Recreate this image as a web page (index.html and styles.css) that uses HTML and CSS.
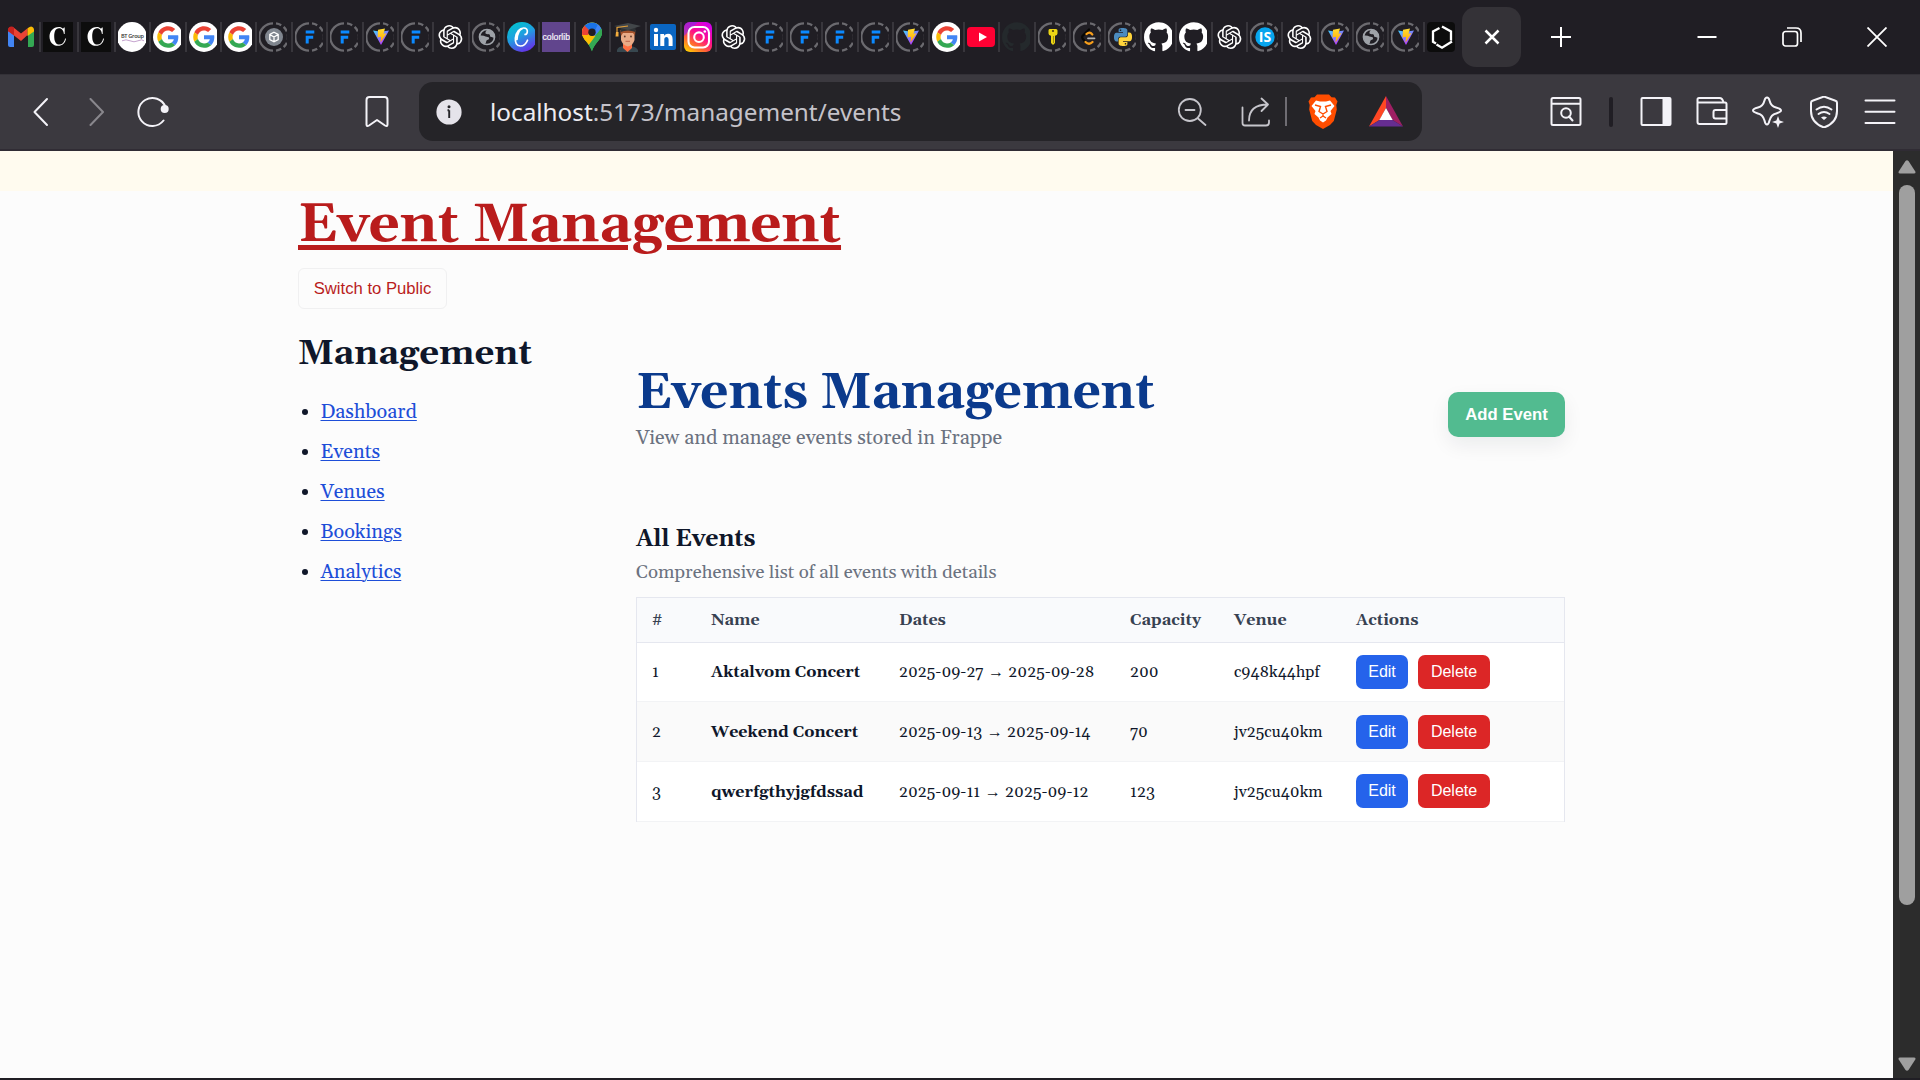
FILE: index.html
```
<!DOCTYPE html>
<html lang="en">
<head>
<meta charset="utf-8">
<title>Events Management</title>
<link rel="stylesheet" href="styles.css">
</head>
<body>
<svg class="sprite" width="0" height="0" aria-hidden="true">
  <defs>
    <linearGradient id="gVite" x1="0" y1="0" x2=".6" y2="1"><stop offset="0" stop-color="#41d1ff"/><stop offset="1" stop-color="#bd34fe"/></linearGradient>
    <linearGradient id="gBolt" x1="0" y1="0" x2="0" y2="1"><stop offset="0" stop-color="#ffdd35"/><stop offset="1" stop-color="#ffa800"/></linearGradient>
    <linearGradient id="gCanva" x1=".2" y1="0" x2=".7" y2="1"><stop offset="0" stop-color="#00c4cc"/><stop offset=".45" stop-color="#1f9fe0"/><stop offset="1" stop-color="#6a2be8"/></linearGradient>
    <linearGradient id="gInsta" x1=".1" y1="1" x2=".75" y2="0"><stop offset="0" stop-color="#ffd600"/><stop offset=".3" stop-color="#ff6930"/><stop offset=".6" stop-color="#fe0d8b"/><stop offset="1" stop-color="#d300e8"/></linearGradient>
    <symbol id="dash" viewBox="0 0 28 30"><path d="M14 1.300A13.700 13.700 0 0 0 14 28.700" fill="none" stroke="#6b6a6f" stroke-width="2.300"/><path d="M17 28.600A13.700 13.700 0 0 0 17 1.400" fill="none" stroke="#6b6a6f" stroke-width="2.300" stroke-dasharray="5.500 3"/></symbol>
    <symbol id="gmail" viewBox="0 0 28 30"><path d="M1 9v14q0 2 2 2h4V12z" fill="#4285f4"/><path d="M27 9v14q0 2-2 2h-4V12z" fill="#34a853"/><path d="M1 9q0-4 3.500-4 1.500 0 3 1.300L14 11.500 20.500 6.300V13L14 19 7 13.500 1 9z" fill="#ea4335"/><path d="M1 8q0-3.500 3.500-3.500Q6 4.500 7 5.700v7.800L1 9z" fill="#c5221f"/><path d="M21 6q1.500-1.500 3.200-1.500Q27 5 27 8v1.500l-6.500 4.500V6.500z" fill="#fbbc04"/></symbol>
    <symbol id="cmark" viewBox="0 0 30 30"><path d="M0 0h30v30H0z" fill="#0d0d0d"/><path d="M16 5C10 5 6.500 9.500 6.500 14.500c0 5.700 3.500 9.300 8.500 9.300 4.500 0 7.500-2.800 8-7.300h-.8c-.9 3.800-2.900 6.100-5.800 6.100-3.900 0-5.200-4-5.200-8.400 0-4.400 1.300-8 4.800-8 3 0 4.600 2.500 4.900 5.800h.8V5.500h-.7l-1 1.300C18.800 5.500 17.500 5 16 5z" fill="#fff"/></symbol>
    <symbol id="bt" viewBox="0 0 28 30"><circle cx="14" cy="15" r="14.900" fill="#fff"/><text x="3" y="16" font-family="Open Sans, sans-serif" font-size="5.600" font-weight="600" fill="#333" textLength="23">BT Group</text><path d="M4 18.800q4-2 8 0t8 0 6 0" stroke="#b58ac0" stroke-width=".8" fill="none"/></symbol>
    <symbol id="google" viewBox="0 0 28 30"><circle cx="15" cy="15" r="15" fill="#fff"/><g transform="translate(4.200 4.200) scale(.45)"><path fill="#ea4335" d="M24 9.500c3.540 0 6.710 1.220 9.210 3.600l6.850-6.850C35.900 2.380 30.470 0 24 0 14.620 0 6.510 5.380 2.560 13.220l7.980 6.190C12.430 13.720 17.740 9.500 24 9.500z"/><path fill="#4285f4" d="M46.980 24.550c0-1.570-.15-3.090-.38-4.550H24v9.020h12.940c-.58 2.960-2.260 5.480-4.780 7.180l7.730 6c4.510-4.180 7.090-10.360 7.090-17.650z"/><path fill="#fbbc05" d="M10.530 28.590c-.48-1.450-.76-2.990-.76-4.590s.27-3.140.76-4.590l-7.980-6.190C.92 16.460 0 20.120 0 24c0 3.880.92 7.540 2.560 10.780l7.970-6.190z"/><path fill="#34a853" d="M24 48c6.480 0 11.930-2.130 15.890-5.810l-7.730-6c-2.150 1.450-4.920 2.300-8.160 2.300-6.260 0-11.570-4.220-13.470-9.910l-7.980 6.190C6.510 42.620 14.620 48 24 48z"/></g></symbol>
    <symbol id="cube" viewBox="0 0 28 30"><use href="#dash"/><circle cx="15" cy="15" r="9" fill="#80868f"/><path d="M15 10.200l4.200 2.300v5L15 19.800l-4.200-2.300v-5zM10.800 12.500L15 15l4.200-2.500M15 15v4.800" fill="none" stroke="#fff" stroke-width="1.300"/></symbol>
    <symbol id="frappe" viewBox="0 0 28 30"><use href="#dash"/><path d="M10.700 8.500h8.600v3h-8.600zM10.700 13.700h7.500v3h-4.500V21.500h-3z" fill="#0b89ff"/></symbol>
    <symbol id="vite" viewBox="0 0 28 30"><use href="#dash"/><path d="M7 8.500l8 1.200 8-1.200-8 14.500z" fill="url(#gVite)"/><path d="M12 7.800l7-1.300-1.500 5.300 3-.5-6 9.200.6-5.700-3.500.6z" fill="url(#gBolt)"/></symbol>
    <symbol id="gpt" viewBox="-2.400 -3 28 30"><path fill="#fff" d="M22.282 9.821a5.985 5.985 0 0 0-.516-4.911 6.046 6.046 0 0 0-6.510-2.900A6.065 6.065 0 0 0 4.981 4.182a5.985 5.985 0 0 0-3.998 2.900 6.046 6.046 0 0 0 .743 7.097 5.980 5.980 0 0 0 .511 4.911 6.051 6.051 0 0 0 6.515 2.900A5.985 5.985 0 0 0 13.260 24a6.056 6.056 0 0 0 5.772-4.206 5.989 5.989 0 0 0 3.998-2.900 6.056 6.056 0 0 0-.748-7.073zm-9.022 12.608a4.476 4.476 0 0 1-2.876-1.041l.142-.08 4.778-2.758a.795.795 0 0 0 .393-.681v-6.737l2.020 1.169a.071.071 0 0 1 .038.052v5.583a4.504 4.504 0 0 1-4.495 4.494zm-9.661-4.125a4.471 4.471 0 0 1-.535-3.014l.142.085 4.783 2.758a.771.771 0 0 0 .781 0l5.843-3.369v2.332a.08.08 0 0 1-.033.062L9.740 19.950a4.499 4.499 0 0 1-6.141-1.646zM2.341 7.896a4.485 4.485 0 0 1 2.366-1.973V11.600a.766.766 0 0 0 .388.677l5.814 3.354-2.020 1.169a.076.076 0 0 1-.071 0l-4.830-2.787A4.504 4.504 0 0 1 2.341 7.872zm16.596 3.856L13.104 8.364 15.119 7.200a.076.076 0 0 1 .071 0l4.830 2.791a4.494 4.494 0 0 1-.677 8.104v-5.677a.79.79 0 0 0-.406-.666zm2.011-3.023l-.142-.085-4.774-2.782a.776.776 0 0 0-.785 0L9.409 9.230V6.897a.066.066 0 0 1 .028-.062l4.830-2.787a4.499 4.499 0 0 1 6.681 4.680zM8.307 12.863l-2.020-1.164a.08.08 0 0 1-.038-.057V6.074a4.499 4.499 0 0 1 7.376-3.454l-.142.081L8.704 5.459a.795.795 0 0 0-.393.681zm1.097-2.366l2.602-1.500 2.607 1.500v2.999l-2.597 1.500-2.607-1.500z"/></symbol>
    <symbol id="globe" viewBox="0 0 28 30"><use href="#dash"/><circle cx="15" cy="15" r="7.500" fill="none" stroke="#9ea2a8" stroke-width="1.700"/><path d="M15 7.500q-2 2.500-1.500 4 2 1.200 3.500.5 1.500 1 1 2.500l4.500 1.500q1-7-7.500-8.500zM7.500 13.500q4-.5 6 1 2.500.5 3.500 1 .5 2-2 2.500-1 .5-1 2.500l-1.500 2Q8 20 7.500 13.500z" fill="#9ea2a8"/></symbol>
    <symbol id="canva" viewBox="0 0 28 30"><circle cx="15" cy="15" r="15" fill="url(#gCanva)"/><path d="M20.500 18.200C19 22 16.500 24 13.400 24c-4 0-5.400-3.700-5-7.900C9 10 12.700 6 16.700 6c2.500 0 3.900 1.500 3.600 3.800-.2 1.600-1.200 2.600-2.200 2.600M10 17.500C10.500 11 13 7.300 15.500 6.500" fill="none" stroke="#fff" stroke-width="1.700" stroke-linecap="round"/></symbol>
    <symbol id="colorlib" viewBox="0 0 28 30"><path d="M0 0h28v30H0z" fill="#61458d"/><text x=".5" y="17.800" font-family="Liberation Sans, sans-serif" font-size="9" fill="#f6f3fa" stroke="#f6f3fa" stroke-width=".2" textLength="27.500" lengthAdjust="spacingAndGlyphs">colorlib</text></symbol>
    <symbol id="maps" viewBox="0 0 28 30"><clipPath id="pin"><path d="M14 .500C8.300.500 4 5 4 10.500c0 7 6.800 9 10 19 3.200-10 10-12 10-19C24 5 19.700.500 14 .500z"/></clipPath><g clip-path="url(#pin)"><path d="M0 0h28v30H0z" fill="#34a853"/><path d="M0 0h28L14 10 6 22 0 14z" fill="#fbbc04"/><path d="M0 4l14 6-9 10z" fill="#fbbc04"/><path d="M2 3l5-1 7 8-9 6-3-2z" fill="#ea4335"/><path d="M6 3l8-4 11 5-11 7z" fill="#1a73e8"/><path d="M20 2l5 6-14 14z" fill="#4285f4"/><path d="M24 7v6L12 30 8 22z" fill="#34a853"/><path d="M3 13l5 0L20 14 9 25z" fill="#fbbc04"/><path d="M24 5v10L12 31 10 24z" fill="#34a853"/></g><circle cx="14" cy="10.300" r="3.700" fill="#201e24"/></symbol>
    <symbol id="grad" viewBox="0 0 28 30"><path d="M4 30v-2q1-3.500 7-4h6q6 .5 8 4v2z" fill="#37474f"/><path d="M10 22h9v4l-4.500 4L10 26z" fill="#ff7043"/><path d="M8 9h13.500v9q-1.500 5.500-6.700 6.500Q9.500 23 8 18z" fill="#e9ab87"/><path d="M7 8h15.500l-.5 6-2-3H10l-2 3z" fill="#a5532c"/><path d="M7.500 4.500L15 7l7.500-2.500V10q-7.500-3-15 0z" fill="#2f3235"/><path d="M1 4l14-3 13 3-13 4z" fill="#424649"/><path d="M15 4L4 5.500V11" fill="none" stroke="#e5a13a" stroke-width="1.200"/><path d="M3 10h2.500v4.500H2.500z" fill="#f3ad3d"/><circle cx="11.800" cy="14.500" r=".9" fill="#5d3a2a"/><circle cx="18" cy="14.500" r=".9" fill="#5d3a2a"/><path d="M12.500 19.300h4.500" stroke="#c0654a"/></symbol>
    <symbol id="linkedin" viewBox="0 0 28 30"><rect x="1" y="2" width="26" height="26" rx="2" fill="#0a66c2"/><path d="M5 12h4v12H5zM11.300 12h3.800v1.700q1.300-2 3.900-2 4.600 0 4.600 5.500V24h-4v-6.300q0-2.700-2-2.700-2.300 0-2.300 2.800V24h-4z" fill="#fff"/><circle cx="7" cy="8" r="2.200" fill="#fff"/></symbol>
    <symbol id="insta" viewBox="0 0 28 30"><rect width="28" height="30" rx="6" fill="url(#gInsta)"/><path d="M6 0h8L0 14V6q0-6 6-6z" fill="#7a2bf0" opacity=".6"/><g fill="none" stroke="#fff" stroke-width="2.100"><rect x="4.500" y="5" width="20.500" height="20.500" rx="6"/><circle cx="15" cy="15.200" r="4.800"/></g><circle cx="20.800" cy="9.500" r="1.300" fill="#fff"/></symbol>
    <symbol id="youtube" viewBox="0 0 28 30"><rect y="5" width="28" height="20" rx="4" fill="#ff0033"/><path d="M12 10.500l8 4.500-8 4.500z" fill="#fff"/></symbol>
    <symbol id="github" viewBox="0 0 28 30"><path transform="scale(1.230)" fill="currentColor" d="M12 .297c-6.630 0-12 5.373-12 12 0 5.303 3.438 9.800 8.205 11.385.6.113.82-.258.82-.577 0-.285-.01-1.040-.015-2.040-3.338.724-4.042-1.610-4.042-1.610C4.422 18.070 3.633 17.700 3.633 17.700c-1.087-.744.084-.729.084-.729 1.205.084 1.838 1.236 1.838 1.236 1.070 1.835 2.809 1.305 3.495.998.108-.776.417-1.305.76-1.605-2.665-.3-5.466-1.332-5.466-5.930 0-1.310.465-2.380 1.235-3.220-.135-.303-.54-1.523.105-3.176 0 0 1.005-.322 3.300 1.230.96-.267 1.980-.399 3-.405 1.020.006 2.040.138 3 .405 2.280-1.552 3.285-1.230 3.285-1.230.645 1.653.24 2.873.12 3.176.765.84 1.230 1.910 1.230 3.220 0 4.610-2.805 5.625-5.475 5.920.42.36.81 1.096.81 2.220 0 1.606-.015 2.896-.015 3.286 0 .315.21.69.825.57C20.565 22.092 24 17.592 24 12.297c0-6.627-5.373-12-12-12"/></symbol>
    <symbol id="key" viewBox="0 0 28 30"><use href="#dash"/><path d="M11.500 7h6.500q1.500 0 1.500 1.500v3q0 2-2.500 2.200V21l-2 2-2-2v-7.300q-2.500-.2-2.500-2.200V8.500Q10.500 7 11.500 7z" fill="#ecd514"/><circle cx="15" cy="9" r="1.100" fill="#4b3d10"/><path d="M15.500 14v7" stroke="#a08c10"/></symbol>
    <symbol id="leet" viewBox="0 0 28 30"><use href="#dash"/><g fill="none" stroke-width="2.300" stroke-linecap="round"><path d="M16 7.500L9.500 14q-1 1.300 0 2.500l2.500 3" stroke="#070706"/><path d="M13.500 12q2.500-2.300 4.500-.8l1.300 1.300M12.500 20q3.500 3.500 7 0" stroke="#f89f1b"/><path d="M15 16.300h6.500" stroke="#b3b3b3" stroke-width="1.800"/></g></symbol>
    <symbol id="pyhalf" viewBox="0 0 24 24"><path d="M14.250.180l.9.200.73.260.59.300.45.320.34.340.25.340.16.330.1.300.04.260.02.200-.01.130V8.500l-.05.630-.13.550-.21.460-.26.380-.3.310-.33.250-.35.190-.35.140-.33.100-.3.070-.26.040-.21.020H8.770l-.69.050-.59.140-.5.220-.41.270-.33.320-.27.350-.2.360-.15.370-.1.350-.07.320-.04.270-.02.210v3.060H3.170l-.21-.03-.28-.07-.32-.12-.35-.18-.36-.26-.36-.36-.35-.46-.32-.59-.28-.73-.21-.88-.14-1.050-.05-1.230.06-1.220.16-1.040.24-.87.32-.71.36-.57.4-.44.42-.33.42-.24.4-.16.36-.1.32-.05.24-.01h.16l.06.010h8.160v-.83H6.180l-.01-2.750-.02-.37.05-.34.11-.31.17-.28.25-.26.31-.23.38-.2.44-.18.51-.15.58-.12.64-.1.71-.06.77-.04.84-.02 1.270.050zm-6.300 1.980l-.23.330-.08.410.08.410.23.340.33.220.41.090.41-.09.33-.22.23-.34.08-.41-.08-.41-.23-.33-.33-.22-.41-.09-.41.090z"/></symbol>
    <symbol id="python" viewBox="0 0 28 30"><use href="#dash"/><g transform="translate(6 6)"><use href="#pyhalf" width="18" height="18" fill="#4b8bbe"/><use href="#pyhalf" width="18" height="18" fill="#ffd43b" transform="rotate(180 9 9)"/></g></symbol>
    <symbol id="is" viewBox="0 0 28 30"><use href="#dash"/><circle cx="15" cy="15" r="9.700" fill="#08a5ee"/><text x="15" y="20" text-anchor="middle" font-family="Open Sans, sans-serif" font-weight="700" font-size="14" fill="#fff">IS</text></symbol>
    <symbol id="hexa" viewBox="0 0 28 30"><rect width="28" height="30" rx="4" fill="#0c0c0c"/><path d="M12.500 6L6 9.500v10.300l3 1.700M15 4.500l9 5v9M25 19.500l-10 6.200-5.500-3.200" fill="none" stroke="#fff" stroke-width="2.300"/></symbol>
  </defs>
</svg>

<div class="window">
  <header class="tabstrip">
    <div class="tabs">
      <span class="tab tab-wide tab-first"><svg><use href="#gmail"/></svg></span>
      <span class="tab tab-wide"><svg class="square"><use href="#cmark"/></svg></span>
      <span class="tab tab-wide"><svg class="square"><use href="#cmark"/></svg></span>
      <span class="tab"><svg><use href="#bt"/></svg></span>
      <span class="tab"><svg><use href="#google"/></svg></span>
      <span class="tab"><svg><use href="#google"/></svg></span>
      <span class="tab"><svg><use href="#google"/></svg></span>
      <span class="tab"><svg><use href="#cube"/></svg></span>
      <span class="tab"><svg><use href="#frappe"/></svg></span>
      <span class="tab"><svg><use href="#frappe"/></svg></span>
      <span class="tab"><svg><use href="#vite"/></svg></span>
      <span class="tab"><svg><use href="#frappe"/></svg></span>
      <span class="tab"><svg><use href="#gpt"/></svg></span>
      <span class="tab"><svg><use href="#globe"/></svg></span>
      <span class="tab"><svg><use href="#canva"/></svg></span>
      <span class="tab"><svg><use href="#colorlib"/></svg></span>
      <span class="tab"><svg><use href="#maps"/></svg></span>
      <span class="tab"><svg><use href="#grad"/></svg></span>
      <span class="tab"><svg><use href="#linkedin"/></svg></span>
      <span class="tab"><svg><use href="#insta"/></svg></span>
      <span class="tab"><svg><use href="#gpt"/></svg></span>
      <span class="tab"><svg><use href="#frappe"/></svg></span>
      <span class="tab"><svg><use href="#frappe"/></svg></span>
      <span class="tab"><svg><use href="#frappe"/></svg></span>
      <span class="tab"><svg><use href="#frappe"/></svg></span>
      <span class="tab"><svg><use href="#vite"/></svg></span>
      <span class="tab"><svg><use href="#google"/></svg></span>
      <span class="tab"><svg><use href="#youtube"/></svg></span>
      <span class="tab dim"><svg><use href="#github"/></svg></span>
      <span class="tab"><svg><use href="#key"/></svg></span>
      <span class="tab"><svg><use href="#leet"/></svg></span>
      <span class="tab"><svg><use href="#python"/></svg></span>
      <span class="tab"><svg><use href="#github"/></svg></span>
      <span class="tab"><svg><use href="#github"/></svg></span>
      <span class="tab"><svg><use href="#gpt"/></svg></span>
      <span class="tab"><svg><use href="#is"/></svg></span>
      <span class="tab"><svg><use href="#gpt"/></svg></span>
      <span class="tab"><svg><use href="#vite"/></svg></span>
      <span class="tab"><svg><use href="#globe"/></svg></span>
      <span class="tab"><svg><use href="#vite"/></svg></span>
      <span class="tab"><svg><use href="#hexa"/></svg></span>
    </div>
    <div class="tab-active"><svg width="16" height="16" viewBox="0 0 16 16"><path d="M1.500 1.500l13 13M14.500 1.500l-13 13" stroke="#fff" stroke-width="2.500"/></svg></div>
    <svg class="new-tab" width="20" height="20" viewBox="0 0 20 20"><path d="M10 0v20M0 10h20" stroke="#fff" stroke-width="2"/></svg>
    <div class="controls">
      <svg width="20" height="20" viewBox="0 0 20 20"><path d="M.500 10h19" stroke="#fff" stroke-width="2"/></svg>
      <svg width="20" height="20" viewBox="0 0 20 20"><g fill="none" stroke="#fff" stroke-width="1.700"><rect x="1" y="4.500" width="14.500" height="14.500" rx="2.500"/><path d="M5 1h9q5 0 5 5v9"/></g></svg>
      <svg width="20" height="20" viewBox="0 0 20 20"><path d="M.500.500l19 19M19.500.500l-19 19" stroke="#fff" stroke-width="1.800"/></svg>
    </div>
  </header>

  <div class="toolbar">
    <div class="nav">
      <svg class="ico" viewBox="0 0 32 32"><path d="M22 3L9.500 16 22 29" class="line"/></svg>
      <svg class="ico ico-forward" viewBox="0 0 32 32"><path d="M10.500 3L23 16 10.500 29" class="line"/></svg>
      <svg class="ico ico-reload" viewBox="0 0 32 32"><path d="M26.500 24.500A14 14 0 1 1 28.500 11" class="line"/><circle cx="27.700" cy="13" r="4" fill="#f4f3f8"/></svg>
      <svg class="ico ico-bookmark" viewBox="0 0 32 32"><path d="M5.500 28.500V4q0-3 3-3h15q3 0 3 3v24.500q0 2.500-2.500 1L16 24l-8 5.500q-2.500 1.500-2.500-1z" class="line"/></svg>
    </div>
    <div class="address">
      <svg class="info" width="26" height="26" viewBox="0 0 26 26"><circle cx="13" cy="13" r="12.600" fill="#e5e3ea"/><path d="M13.200 11.300V19M11.500 11.300h1.700" stroke="#252428" stroke-width="1.900"/><circle cx="13" cy="7.800" r="1.500" fill="#252428"/></svg>
      <span class="url"><b>localhost</b>:5173/management/events</span>
      <svg class="zoom-out" width="30" height="30" viewBox="0 0 30 30"><g fill="none" stroke="#c6c5cb" stroke-width="1.800" stroke-linecap="round"><circle cx="12.800" cy="13" r="11"/><path d="M21 21.500l7.500 6.500M8.500 13h9"/></g></svg>
      <svg class="share" width="30" height="30" viewBox="0 0 30 30"><g fill="none" stroke="#c6c5cb" stroke-width="1.800" stroke-linecap="round" stroke-linejoin="round"><path d="M1.500 10.500V26q0 2.500 2.500 2.500h21q3 0 3-3v-2M8 23.500C8 13 14 7.500 27 7.500M20.500 1.500L27 7.500l-6.500 6.500"/></g></svg>
      <i class="address-line"></i>
      <svg class="brave" width="30" height="35" viewBox="0 0 30 35"><path d="M9 .500h12l2.500 2.800 3.500.3 2.500 4-1.200 3.400.5 4.500-3 11.500L22 31l-7 4-7-4-3.800-4-3-11.500.5-4.500L.500 7.600l2.500-4 3.500-.3z" fill="#ff4d00"/><path d="M8 6.500l4 1h6l4-1 4.500 5.500-4 5 1 3-4 3.500-1.500 3-3 2-3-2-1.500-3L6.500 20l1-3-4-5z" fill="#fff"/><path d="M7 11l5.500 1.500-1.500 5 4 2.500 4-2.500-1.500-5L23 11M15 20v2l-3 2M15 22l3 2" fill="none" stroke="#ff4d00" stroke-width="1.400"/></svg>
      <svg class="bat" width="34" height="31" viewBox="0 0 34 31"><path d="M17 0v12L10.500 24 0 30.500z" fill="#ff4724"/><path d="M17 0l17 30.500L23.500 24 17 12z" fill="#9e1f63"/><path d="M0 30.500L10.500 24h13L34 30.500z" fill="#662d91"/><path d="M17 12l6.700 12H10.300z" fill="#fff"/></svg>
    </div>
    <div class="actions">
      <svg class="ico" viewBox="0 0 32 32"><rect x="1.500" y="2" width="29" height="27" rx="1.500" class="line"/><path d="M2 7.700h28" class="line"/><circle cx="16" cy="17" r="4.800" class="line"/><path d="M19 20.500l3.500 4" class="line"/></svg>
      <i class="action-line"></i>
      <svg class="ico" viewBox="0 0 32 32"><rect x="1.500" y="2" width="29" height="27" rx="1" class="line"/><path d="M22.500 2h8v27h-8z" fill="#f4f3f8"/></svg>
      <svg class="ico" viewBox="0 0 32 32"><path d="M1.500 7V3.500Q1.500 2 3 2h20.500q3 0 4 4.500M1.500 6.500H29q1.500 0 1.500 1.500v18.500q0 1.500-1.500 1.500H3.500q-2 0-2-2z" class="line"/><path d="M30 14H19.500q-2 0-2 2v4.500q0 2 2 2H30" class="line"/></svg>
      <svg class="ico" viewBox="0 0 32 32"><path d="M15 1.500c1.500 0 2 1 2.500 3 1 4 2.500 6 6.500 7 3.500 1 5 1.500 5 3s-2 2-5 3c-4 1-5.500 3.500-6.500 7-.6 2.500-1 4-2.500 4s-2-1.500-2.500-4c-1-3.500-2.500-6-6.500-7-3-1-5-1.500-5-3s1.500-2 5-3c4-1 5.500-3 6.500-7 .5-2 1-3 2.500-3z" class="line"/><path d="M26 20l1.600 4.400L32 26l-4.400 1.600L26 32l-1.600-4.400L20 26l4.400-1.600z" fill="#f4f3f8"/></svg>
      <svg class="ico" viewBox="0 0 32 32"><path d="M16 .500l11.500 4.300q1.500.5 1.500 2V15c0 9-6 14-13 16.500C9 29 3 24 3 15V6.800q0-1.500 1.500-2z" class="line"/><path d="M8.500 13.500q7.500-5.500 15 0M10.500 18q5.500-4 11 0" class="line"/><path d="M13 21.500q3-2 6 0l-3 2.500z" fill="#f4f3f8"/></svg>
      <svg class="ico" viewBox="0 0 32 32"><path d="M1.500 4.500h29M1.500 15.700h29M1.500 27h29" class="line"/></svg>
    </div>
  </div>

  <div class="viewport">
    <div class="page">
      <div class="notice"></div>
      <div class="container">
        <h1 class="brand"><a href="#">Event Management</a></h1>
        <button class="switch">Switch to Public</button>
        <div class="layout">
          <aside>
            <h2 class="side-title">Management</h2>
            <ul class="side-nav">
              <li><a href="#">Dashboard</a></li>
              <li><a href="#">Events</a></li>
              <li><a href="#">Venues</a></li>
              <li><a href="#">Bookings</a></li>
              <li><a href="#">Analytics</a></li>
            </ul>
          </aside>
          <main>
            <div class="page-head">
              <div>
                <h1 class="page-title">Events Management</h1>
                <p class="page-sub">View and manage events stored in Frappe</p>
              </div>
              <button class="add">Add Event</button>
            </div>
            <h3 class="list-title">All Events</h3>
            <p class="list-sub">Comprehensive list of all events with details</p>
            <table class="events">
              <colgroup><col class="c-num"><col class="c-name"><col class="c-dates"><col class="c-cap"><col class="c-venue"><col></colgroup>
              <thead><tr><th class="hash">#</th><th>Name</th><th>Dates</th><th>Capacity</th><th>Venue</th><th>Actions</th></tr></thead>
              <tbody>
                <tr><td>1</td><td class="name">Aktalvom Concert</td><td>2025-09-27 <span class="arrow">→</span> 2025-09-28</td><td>200</td><td>c948k44hpf</td><td><div class="row-actions"><button class="edit">Edit</button><button class="delete">Delete</button></div></td></tr>
                <tr><td>2</td><td class="name">Weekend Concert</td><td>2025-09-13 <span class="arrow">→</span> 2025-09-14</td><td>70</td><td>jv25cu40km</td><td><div class="row-actions"><button class="edit">Edit</button><button class="delete">Delete</button></div></td></tr>
                <tr><td>3</td><td class="name">qwerfgthyjgfdssad</td><td>2025-09-11 <span class="arrow">→</span> 2025-09-12</td><td>123</td><td>jv25cu40km</td><td><div class="row-actions"><button class="edit">Edit</button><button class="delete">Delete</button></div></td></tr>
              </tbody>
            </table>
          </main>
        </div>
      </div>
    </div>
    <div class="scrollbar">
      <svg width="18" height="14" viewBox="0 0 18 14"><path d="M7.500 1Q9 -.500 10.500 1l6.800 10.500Q18 13.500 16 13.500H2Q0 13.500.700 11.500z" fill="#9f9f9f"/></svg>
      <div class="thumb"></div>
      <svg class="down" width="18" height="14" viewBox="0 0 18 14"><path d="M7.500 13Q9 14.500 10.500 13l6.800-10.500Q18 .500 16 .500H2Q0 .500.700 2.500z" fill="#9f9f9f"/></svg>
    </div>
  </div>
</div>
</body>
</html>
```
FILE: styles.css
```
* { box-sizing: border-box; }
body {
  margin: 0;
  overflow: hidden;
  background: #201e24;
  color: #0f172a;
  font-family: Gelasio, Georgia, "Liberation Serif", serif;
}
h1, h2, h3, p, ul { margin: 0; padding: 0; }
svg { display: block; flex: none; }
button { font-family: "Liberation Sans", Arial, sans-serif; border: 0; padding: 0; }
.sprite { position: absolute; }

.window { display: flex; flex-direction: column; width: 1920px; height: 1080px; padding-bottom: 2px; }

/* Tab strip */
.tabstrip { display: flex; align-items: center; height: 74px; padding-left: 2px; flex: none; }
.tabs { display: flex; width: 1460px; }
.tab { display: flex; align-items: center; width: 35.39px; height: 30px; flex: none; padding-left: 2px; border-left: 2px solid #38363c; color: #fff; }
.tab svg { width: 28px; height: 30px; }
.tab svg.square { width: 30px; }
.tab-wide { width: 37.300px; }
.tab-first { border-color: transparent; }
.tab-wide.tab-first { padding-left: 3px; }
.dim { color: #24292c; }
.tab-active { display: flex; align-items: center; justify-content: center; width: 59px; height: 60px; border-radius: 14px; background: #343237; }
.new-tab { margin-left: 30px; }
.controls { display: flex; gap: 65px; margin-left: 125.500px; }

/* Toolbar */
.toolbar { display: flex; align-items: center; height: 77px; flex: none; padding-bottom: 1px; background: #3b393f; border-top: 1px solid #333137; border-bottom: 2px solid #302c34; }
.ico { width: 32px; height: 32px; }
.line { fill: none; stroke: #f4f3f8; stroke-width: 2; stroke-linecap: round; stroke-linejoin: round; }
.nav { display: flex; width: 419px; padding-left: 25px; }
.ico-forward { margin-left: 23px; opacity: .42; }
.ico-reload { margin-left: 25px; }
.ico-bookmark { margin-left: 191.500px; }
.address { display: flex; align-items: center; width: 1003px; height: 59px; padding-left: 17px; border-radius: 14px; background: #252428; }
.url { width: 663px; margin-left: 28px; font: 24.300px "Noto Sans", "Open Sans", sans-serif; line-height: 32px; color: #c4c2c9; white-space: nowrap; }
.url b { font-weight: 400; color: #eeedf2; }
.zoom-out { margin-left: 24px; }
.share { margin-left: 33.500px; }
.address-line { width: 2px; height: 29px; margin-left: 14px; background: #6f6d73; }
.brave { margin-left: 21.500px; }
.bat { margin-left: 31px; }
.actions { display: flex; align-items: center; gap: 24px; margin-left: 127.500px; }
.action-line { width: 4px; height: 30px; margin: 0 3px; border-radius: 2px; background: #201e24; }

/* Page */
.viewport { display: flex; flex: 1; min-height: 0; }
.page { flex: 1; background: #fcfcfc; }
.notice { height: 40px; background: #fffbef; }
.container { width: 1267px; margin-left: 298px; }
.brand { height: 67px; font-size: 54.700px; line-height: 68px; }
.brand a { color: #b91c1c; text-decoration-thickness: 5px; text-underline-offset: 4px; }
.switch { display: block; width: 149px; height: 41px; margin-top: 10px; border: 1px solid #f0f0f1; border-radius: 6px; background: #fcfcfc; color: #b91c1c; font-size: 16.667px; }
.layout { display: grid; grid-template-columns: 338px 929px; margin-top: 25px; }
.side-title { font-size: 34.800px; line-height: 40px; }
.side-nav { margin-top: 18.500px; padding-left: 22.500px; font-size: 19.850px; line-height: 40px; }
.side-nav a { color: #1d4ed8; text-underline-offset: 2px; text-decoration-thickness: 1px; }

.page-head { display: flex; align-items: center; justify-content: space-between; padding-top: 30px; }
.page-title { color: #0b3a8c; font-size: 49.700px; line-height: 60px; }
.page-sub { color: #6b7280; font-size: 19.900px; line-height: 30px; }
.add { width: 117px; height: 45px; margin-top: 11px; padding-top: 1px; border-radius: 10px; background: #52bb90; color: #fff; font-size: 16.667px; font-weight: 700; box-shadow: 0 8px 20px rgba(15, 23, 42, .07); }
.list-title { margin-top: 71px; font-size: 23.150px; line-height: 30px; }
.list-sub { margin-top: 5px; color: #6b7280; font-size: 18.650px; line-height: 26px; }

.events { width: 929px; margin-top: 11px; table-layout: fixed; border: 1px solid #e5e7ef; border-bottom: 0; border-spacing: 0; background: #fff; font-size: 16.100px; }
.c-num { width: 59px; }
.c-name { width: 188px; }
.c-dates { width: 231px; }
.c-cap { width: 104px; }
.c-venue { width: 122px; }
.events th, .events td { padding: 0 0 0 15px; text-align: left; white-space: nowrap; }
.events th { height: 45px; background: #f9fafc; border-bottom: 1px solid #e5e7ef; color: #374151; }
.events .hash { font-weight: 400; }
.events td { height: 60px; padding-top: 1px; border-bottom: 1px solid #f2f3f5; }
.events tr:first-child td { height: 59px; padding-top: 0; }
.events tbody tr:nth-child(2) { background: #fafafa; }
.events tr:last-child .row-actions { margin-top: -2px; }
.name { font-weight: 700; }
.arrow { font-family: "Liberation Serif", serif; line-height: 1; margin: 0 .5px; }
.row-actions { display: flex; gap: 10px; }
.row-actions button { height: 34px; border-radius: 7px; color: #fff; font-size: 16px; }
.edit { width: 52px; background: #2563eb; }
.delete { width: 72px; background: #dc2626; }

/* Scrollbar */
.scrollbar { display: flex; flex-direction: column; align-items: center; width: 27px; padding: 9px 0 7px; background: #2c2c2c; }
.thumb { width: 16px; height: 720px; margin-top: 11px; border-radius: 8px; background: #9f9f9f; }
.down { margin-top: auto; }
```
